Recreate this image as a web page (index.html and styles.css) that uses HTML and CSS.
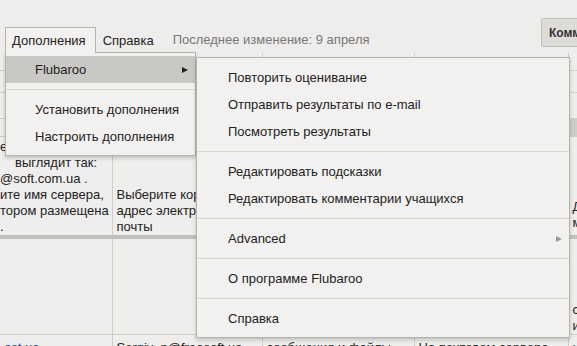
FILE: index.html
```html
<!DOCTYPE html>
<html lang="ru">
<head>
  <meta charset="UTF-8">
  <title>Flubaroo</title>
  <link rel="stylesheet" href="styles.css">
</head>
<body>
  <div class="sheet">
    <div class="topbar">
      <div class="tab active">Дополнения</div>
      <div class="tab">Справка</div>
      <div class="saved">Последнее изменение: 9 апреля</div>
      <button class="comment-btn">Комментарии</button>
    </div>

    <table class="grid">
      <colgroup>
        <col class="c1"><col class="c2"><col class="c3"><col class="c4"><col class="c5">
      </colgroup>
      <tr class="r0"><td></td><td></td><td></td><td></td><td></td></tr>
      <tr class="r1"><td></td><td></td><td></td><td></td><td></td></tr>
      <tr class="r2"><td></td><td></td><td></td><td></td><td></td></tr>
      <tr class="r3"><td></td><td></td><td></td><td></td><td class="shaded"></td></tr>
      <tr class="r4">
        <td class="clip">е имя сервере<br><span class="gap">выглядит так:</span><br>@soft.com.ua .<br>ите имя сервера,<br>тором размещена<br>.</td>
        <td>Выберите корпоративный<br>адрес электронной<br>почты</td>
        <td></td>
        <td></td>
        <td class="raise">Домен<br>может</td>
      </tr>
      <tr class="r5"><td></td><td></td><td></td><td></td><td>с<br>и</td></tr>
      <tr class="r6">
        <td class="top"><span class="link">ost.ua</span></td>
        <td class="top">Sergiy_p@freesoft.ua</td>
        <td class="top">сообщения и файлы</td>
        <td class="top">На почтовом сервере</td>
        <td class="top">и</td>
      </tr>
    </table>

    <div class="menu addons-menu">
      <div class="item selected"><span>Flubaroo</span><span class="arrow"></span></div>
      <div class="sep"></div>
      <div class="item">Установить дополнения</div>
      <div class="item">Настроить дополнения</div>
    </div>

    <div class="menu sub-menu">
      <div class="item">Повторить оценивание</div>
      <div class="item">Отправить результаты по e-mail</div>
      <div class="item">Посмотреть результаты</div>
      <div class="sep"></div>
      <div class="item">Редактировать подсказки</div>
      <div class="item">Редактировать комментарии учащихся</div>
      <div class="sep"></div>
      <div class="item"><span>Advanced</span><span class="arrow dim"></span></div>
      <div class="sep"></div>
      <div class="item">О программе Flubaroo</div>
      <div class="sep"></div>
      <div class="item">Справка</div>
    </div>
  </div>
</body>
</html>
```

FILE: styles.css
```css
* {
  box-sizing: border-box;
}

body {
  margin: 0;
  width: 577px;
  height: 346px;
  overflow: hidden;
  background-color: #eeedeb;
  color: #222;
  font-family: "Liberation Sans", Arial, sans-serif;
  font-size: 13px;
}

.sheet {
  position: relative;
  height: 346px;
  overflow: hidden;
}

.topbar {
  display: flex;
  align-items: flex-end;
  height: 53px;
  padding-left: 5px;
}

.tab {
  height: 26px;
  line-height: 25px;
  padding: 0 6px;
  border: 1px solid transparent;
  border-bottom: none;
}

.tab.active {
  position: relative;
  z-index: 3;
  padding-right: 9px;
  background-color: #f2f1ef;
  border-color: #b6b4b1;
}

.saved {
  height: 26px;
  line-height: 25px;
  margin-left: 12px;
  color: #777;
}

.comment-btn {
  flex-shrink: 0;
  align-self: flex-start;
  width: 100px;
  height: 29px;
  margin: 18px -64px 0 auto;
  padding: 0 0 0 7px;
  text-align: left;
  background-color: #dedcd9;
  border: 1px solid #c0beba;
  border-radius: 2px;
  color: #333;
  font-family: "Liberation Sans", Arial, sans-serif;
  font-size: 12px;
  font-weight: bold;
}

.grid {
  width: 668px;
  table-layout: fixed;
  border-collapse: collapse;
  background-color: #efeeec;
}

.grid .c1 { width: 112px; }
.grid .c2 { width: 150px; }
.grid .c3 { width: 152px; }
.grid .c4 { width: 154px; }
.grid .c5 { width: 100px; }

.grid td {
  padding: 0 3px 0 4px;
  border: 1px solid #cfcdca;
  line-height: 16px;
  vertical-align: bottom;
  white-space: nowrap;
  overflow: hidden;
}

.grid .r0 td { height: 17px; border-top: none; }
.grid .r1 td { height: 22px; }
.grid .r2 td { height: 26px; }
.grid .r3 td { height: 18px; }
.grid .r4 td { height: 101px; border-bottom: 4px solid #c2c0bd; }
.grid .r5 td { height: 97px; }
.grid .r6 td { height: 30px; }

.grid td:first-child {
  border-left: none;
}

.grid .clip {
  padding-left: 0;
}

.grid .gap {
  padding-left: 15px;
}

.grid .raise {
  padding-bottom: 4px;
}

.grid .shaded {
  background-color: #cfcdca;
}

.grid .top {
  vertical-align: top;
  padding-top: 5px;
}

.link {
  color: #1f3f8f;
}

.menu {
  position: absolute;
  z-index: 2;
  background-color: #f2f1ef;
  border: 1px solid #b6b4b1;
  box-shadow: 0 2px 4px rgba(0, 0, 0, 0.2);
}

.addons-menu {
  left: 5px;
  top: 52px;
  width: 191px;
  padding: 3px 0 5px;
}

.sub-menu {
  left: 196px;
  top: 57px;
  width: 374px;
  padding: 6px 0 5px;
}

.item {
  display: flex;
  align-items: center;
  justify-content: space-between;
  height: 27px;
  padding: 0 7px 0 29px;
  white-space: nowrap;
}

.sub-menu .item {
  padding-left: 31px;
}

.item.selected {
  background-color: #cac8c5;
}

.sep {
  height: 1px;
  margin: 6px 0;
  background-color: #d8d6d3;
}

.arrow {
  width: 0;
  height: 0;
  border-left: 6px solid #222;
  border-top: 3.5px solid transparent;
  border-bottom: 3.5px solid transparent;
}

.arrow.dim {
  border-left-color: #999;
}
```
